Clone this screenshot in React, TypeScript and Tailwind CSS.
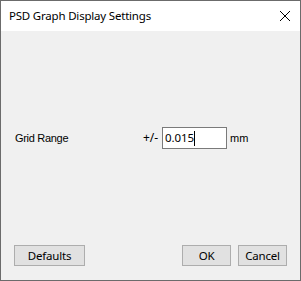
import React from "react";

export default function App() {
  return (
    <div className="w-[301px] h-[281px] border border-[#6b6b6b] flex flex-col bg-[#f0f0f0] text-black">
      <div className="h-[30px] bg-white flex items-center justify-between pl-[8px] pr-[9px]">
        <span className="text-[11.5px] tracking-[-0.2px] font-['Noto_Sans',sans-serif] leading-none pb-[1px]">PSD Graph Display Settings</span>
        <svg width="12" height="12" viewBox="0 0 12 12" className="block">
          <path d="M1 1 L11 11 M11 1 L1 11" stroke="#000" strokeWidth="1" fill="none" />
        </svg>
      </div>
      <div className="flex-1 flex flex-col">
        <div className="mt-[96px] flex items-center h-[22px] pl-[14px] text-[11px] font-['Liberation_Sans',sans-serif]">
          <span className="w-[128px] tracking-[-0.3px]">Grid Range</span>
          <span className="text-[12px] font-['Noto_Sans',sans-serif] w-[19px]">+/-</span>
          <div className="w-[65px] h-[22px] border border-[#7a7a7a] bg-white flex items-center pl-[2px]">
            <span className="text-[11.5px] tracking-[-0.1px] font-['Noto_Sans',sans-serif] leading-none">0.015</span>
            <span className="w-px h-[15px] bg-black"></span>
          </div>
          <span className="ml-[3px]">mm</span>
        </div>
        <div className="flex-1"></div>
        <div className="flex items-center px-[13px] pb-[14px] text-[11.5px] tracking-[-0.2px] font-['Noto_Sans',sans-serif]">
          <button className="w-[71px] h-[21px] border border-[#adadad] bg-[#e1e1e1] flex items-center justify-center leading-none">Defaults</button>
          <div className="flex-1"></div>
          <button className="w-[49px] h-[21px] border border-[#adadad] bg-[#e1e1e1] flex items-center justify-center leading-none">OK</button>
          <button className="ml-[7px] w-[49px] h-[21px] border border-[#adadad] bg-[#e1e1e1] flex items-center justify-center leading-none">Cancel</button>
        </div>
      </div>
    </div>
  );
}
